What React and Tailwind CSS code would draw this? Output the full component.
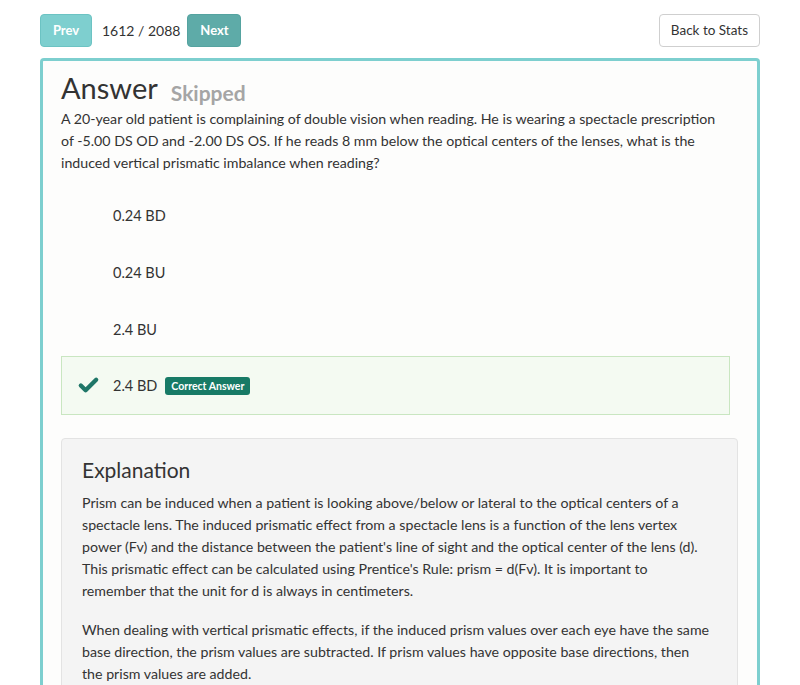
import { Check } from "lucide-react";

const options = [
  { text: "0.24 BD" },
  { text: "0.24 BU" },
  { text: "2.4 BU" },
  { text: "2.4 BD", correct: true },
];

const App = () => {
  return (
    <div className="min-h-[685px] bg-white text-[#333] font-['Lato','Open_Sans',sans-serif]">
      {/* Top navigation */}
      <div className="flex items-center justify-between pl-10 pr-10 pt-[14px]">
        <div className="flex items-center">
          <button className="h-[33px] w-[52px] rounded border border-[#6cc3c3] bg-[#7ecfcf] text-[13px] font-bold text-white">
            Prev
          </button>
          <span className="ml-[10px] text-[14px] text-[#333]">1612 / 2088</span>
          <button className="ml-[7px] h-[33px] w-[54px] rounded border border-[#55a3a0] bg-[#5eaba8] text-[13px] font-bold text-white">
            Next
          </button>
        </div>
        <button className="h-[33px] rounded border border-[#cfcfcf] bg-white px-[11px] text-[13.5px] text-[#333]">
          Back to Stats
        </button>
      </div>

      {/* Answer card */}
      <div className="mx-10 mt-[11px] rounded-t border-[3px] border-b-0 border-[#7dcfcf] bg-[#fdfdfc] pl-[18px] pr-[28px] pt-[10px] pb-6">
        <div className="flex items-end">
          <h1 className="text-[29px] leading-[34px] text-[#333]">Answer</h1>
          <span className="mb-[-3px] ml-[13px] text-[21px] font-bold text-[#a5a5a5]">Skipped</span>
        </div>
        <p className="mt-[3px] text-[14.2px] leading-[22px] text-[#333]">
          A 20-year old patient is complaining of double vision when reading. He is wearing a spectacle prescription
          of -5.00 DS OD and -2.00 DS OS. If he reads 8 mm below the optical centers of the lenses, what is the
          induced vertical prismatic imbalance when reading?
        </p>

        {/* Options */}
        <div className="mt-[13px] flex flex-col">
          {options.map((option) => (
            <div
              key={option.text}
              className={`flex h-[57px] items-center ${
                option.correct
                  ? "mr-[-1px] mt-[-2px] h-[59px] border border-[#c9e6c1] bg-[#f4faf2]"
                  : "border border-transparent"
              }`}
            >
              <div className="flex w-[51px] justify-center pl-[2px]">
                {option.correct && <Check className="h-[23px] w-[23px] text-[#1f7668]" strokeWidth={4.5} />}
              </div>
              <span className="text-[14.5px] text-[#333]">{option.text}</span>
              {option.correct && (
                <span className="ml-[8px] rounded-[3px] bg-[#177a66] px-[6px] py-[2px] text-[10.5px] font-bold leading-[14px] text-white">
                  Correct Answer
                </span>
              )}
            </div>
          ))}
        </div>

        {/* Explanation */}
        <div className="mt-[23px] mr-[-9px] rounded border border-[#e3e3e3] bg-[#f4f4f4] px-5 pt-[17px] pb-5">
          <h2 className="text-[21px] leading-[28px] text-[#333]">Explanation</h2>
          <p className="mt-[8px] text-[14.2px] leading-[22px] text-[#333]">
            Prism can be induced when a patient is looking above/below or lateral to the optical centers of a
            <br />
            spectacle lens. The induced prismatic effect from a spectacle lens is a function of the lens vertex
            <br />
            power (Fv) and the distance between the patient's line of sight and the optical center of the lens (d).
            <br />
            This prismatic effect can be calculated using Prentice's Rule: prism = d(Fv). It is important to
            <br />
            remember that the unit for d is always in centimeters.
          </p>
          <p className="mt-[17px] text-[14.2px] leading-[22px] text-[#333]">
            When dealing with vertical prismatic effects, if the induced prism values over each eye have the same
            <br />
            base direction, the prism values are subtracted. If prism values have opposite base directions, then
            <br />
            the prism values are added.
          </p>
        </div>
      </div>
    </div>
  );
};

export default App;
